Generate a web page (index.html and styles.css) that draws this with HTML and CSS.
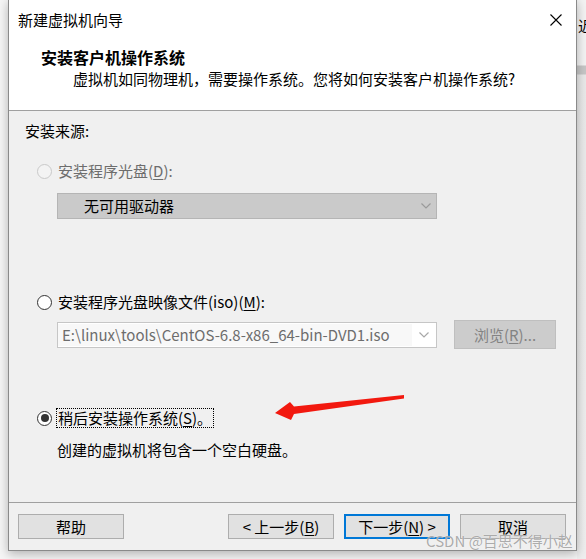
FILE: index.html
```html
<!DOCTYPE html>
<html lang="zh-CN">
<head>
<meta charset="utf-8">
<title>新建虚拟机向导</title>
<link rel="stylesheet" href="styles.css">
</head>
<body>
<div class="desk-strip"><span class="desk-char">近</span></div>

<div class="window">
  <div class="titlebar">
    <span class="title">新建虚拟机向导</span>
    <svg class="close" width="12" height="12" viewBox="0 0 12 12"><path d="M0.5 0.5 L11.5 11.5 M11.5 0.5 L0.5 11.5" stroke="#000" stroke-width="1.1" fill="none"/></svg>
  </div>
  <div class="header">
    <div class="h-title">安装客户机操作系统</div>
    <div class="h-sub">虚拟机如同物理机，需要操作系统。您将如何安装客户机操作系统?</div>
  </div>
  <div class="content">
    <div class="source">安装来源:</div>

    <div class="option opt1 is-disabled">
      <span class="radio radio-disabled"></span>
      <span class="label">安装程序光盘(<u>D</u>):</span>
    </div>
    <div class="select select-disabled">
      <span class="select-text">无可用驱动器</span>
      <svg class="chev" width="10" height="6" viewBox="0 0 10 6"><path d="M0.5 0.5 L5 5 L9.5 0.5" stroke="#9a9a9a" stroke-width="1.2" fill="none"/></svg>
    </div>

    <div class="option opt2">
      <span class="radio"></span>
      <span class="label">安装程序光盘映像文件(iso)(<u>M</u>):</span>
    </div>
    <div class="iso-row">
      <div class="combo">
        <span class="combo-text">E:\linux\tools\CentOS-6.8-x86_64-bin-DVD1.iso</span>
        <span class="combo-btn"><svg class="chev" width="10" height="6" viewBox="0 0 10 6"><path d="M0.5 0.5 L5 5 L9.5 0.5" stroke="#a8a8a8" stroke-width="1.2" fill="none"/></svg></span>
      </div>
      <div class="btn browse">浏览(<u>R</u>)...</div>
    </div>

    <div class="option opt3">
      <span class="radio radio-checked"></span>
      <span class="label focus">稍后安装操作系统(<u>S</u>)。</span>
    </div>
    <div class="desc">创建的虚拟机将包含一个空白硬盘。</div>
  </div>
  <div class="footer">
    <div class="btn">帮助</div>
    <div class="spacer"></div>
    <div class="btn">&lt; 上一步(<u>B</u>)</div>
    <div class="btn btn-default">下一步(<u>N</u>) &gt;</div>
    <div class="btn">取消</div>
  </div>
</div>

<svg class="arrow" width="586" height="559" viewBox="0 0 586 559">
  <polygon points="404,395 294,406.5 290,402 275,413 291,420 294,414 404,398.5" fill="#f2190f"/>
</svg>

<div class="watermark">CSDN @百思不得小赵</div>
</body>
</html>
```
FILE: styles.css
```css
* { box-sizing: border-box; }

html, body {
  margin: 0;
  padding: 0;
  width: 586px;
  height: 559px;
  overflow: hidden;
}

body {
  background: #f6f6f6;
  font-family: "Noto Sans CJK SC", "Microsoft YaHei", sans-serif;
  font-size: 15px;
  color: #000;
  position: relative;
}

u { text-decoration: underline; text-underline-offset: 2px; text-decoration-thickness: 1px; }

/* desktop strip visible to the right of the dialog */
.desk-strip {
  position: absolute;
  left: 577px;
  top: 0;
  width: 9px;
  height: 559px;
  background: linear-gradient(to bottom, #f3f3f3 0, #f3f3f3 65px, #c6c6c6 66px, #c6c6c6 74px, #e9e9e9 75px, #efefef 100%);
  overflow: hidden;
}
.desk-char {
  position: absolute;
  left: 1px;
  top: 16px;
  font-size: 15px;
  line-height: 20px;
  color: #000;
}

/* dialog window */
.window {
  position: absolute;
  left: 8px;
  top: -1px;
  width: 569px;
  height: 552px;
  border: 1px solid #8a8a8a;
  background: #f0f0f0;
  box-shadow: 0 3px 10px rgba(0, 0, 0, 0.28);
  display: flex;
  flex-direction: column;
}

.titlebar {
  height: 40px;
  background: #fff;
  display: flex;
  align-items: center;
  justify-content: space-between;
  padding: 0 14px 0 9px;
}
.title { line-height: 20px; }
.close { display: block; margin-top: -1px; }

.header {
  height: 71px;
  background: #fff;
  border-bottom: 1px solid #a0a0a0;
  padding: 7px 0 0 32px;
}
.h-title {
  font-size: 16px;
  font-weight: bold;
  line-height: 20px;
}
.h-sub {
  margin: 2px 0 0 32px;
  line-height: 20px;
}

.content {
  height: 391px;
  padding: 10px 0 0 16px;
}
.source { line-height: 20px; }

.option {
  display: flex;
  align-items: center;
  height: 20px;
  margin-left: 12px;
}
.opt1 { margin-top: 20px; }
.opt2 { margin-top: 73px; }
.opt3 { margin-top: 59px; }

.radio {
  width: 15px;
  height: 15px;
  border-radius: 50%;
  border: 1px solid #333;
  background: #fff;
  position: relative;
  flex: none;
}
.radio-disabled {
  border-color: #c9c9c9;
  background: #f3f3f3;
}
.radio-checked::after {
  content: "";
  position: absolute;
  left: 2.5px;
  top: 2.5px;
  width: 8px;
  height: 8px;
  border-radius: 50%;
  background: #333;
}

.label {
  margin-left: 4px;
  padding: 0 1px;
  line-height: 18px;
  border: 1px solid transparent;
  white-space: nowrap;
}
.is-disabled .label { color: #6d6d6d; }
.focus { border: 1px dotted #000; }

.select {
  margin: 12px 0 0 32px;
  width: 380px;
  height: 26px;
  display: flex;
  align-items: center;
  justify-content: space-between;
}
.select-disabled {
  background: #cacaca;
  border: 1px solid #b5b5b5;
  padding: 0 5px 0 26px;
}
.select-text { line-height: 20px; }
.chev { display: block; }

.iso-row {
  margin: 8px 0 0 32px;
  display: flex;
  align-items: center;
  gap: 17px;
  height: 29px;
}
.combo {
  width: 380px;
  height: 26px;
  border: 1px solid #c6c6c6;
  background: #fff;
  display: flex;
  align-items: stretch;
}
.combo-text {
  flex: 1;
  background: #f8f8f8;
  margin: 1px 0;
  padding-left: 4px;
  color: #6d6d6d;
  line-height: 22px;
  white-space: nowrap;
  overflow: hidden;
}
.combo-btn {
  width: 24px;
  display: flex;
  align-items: center;
  justify-content: center;
}

.btn {
  width: 106px;
  height: 25px;
  background: #e1e1e1;
  border: 1px solid #adadad;
  display: flex;
  align-items: center;
  justify-content: center;
  line-height: 20px;
  white-space: nowrap;
}
.browse {
  width: 102px;
  height: 29px;
  background: #cccccc;
  border-color: #bfbfbf;
  color: #838383;
}
.btn-default { border: 2px solid #0078d7; }

.desc {
  margin: 12px 0 0 32px;
  line-height: 20px;
}

.footer {
  height: 48px;
  border-top: 1px solid #a0a0a0;
  padding: 11px 10px 11px 9px;
  display: flex;
  gap: 10px;
}
.spacer { flex: 1; }

/* overlays */
.arrow {
  position: absolute;
  left: 0;
  top: 0;
  pointer-events: none;
}
.watermark {
  position: absolute;
  left: 426px;
  top: 530px;
  font-size: 15px;
  line-height: 22px;
  color: rgba(150, 150, 150, 0.8);
  text-shadow: 0 0 1px rgba(255, 255, 255, 0.9);
  white-space: nowrap;
  pointer-events: none;
}
```
